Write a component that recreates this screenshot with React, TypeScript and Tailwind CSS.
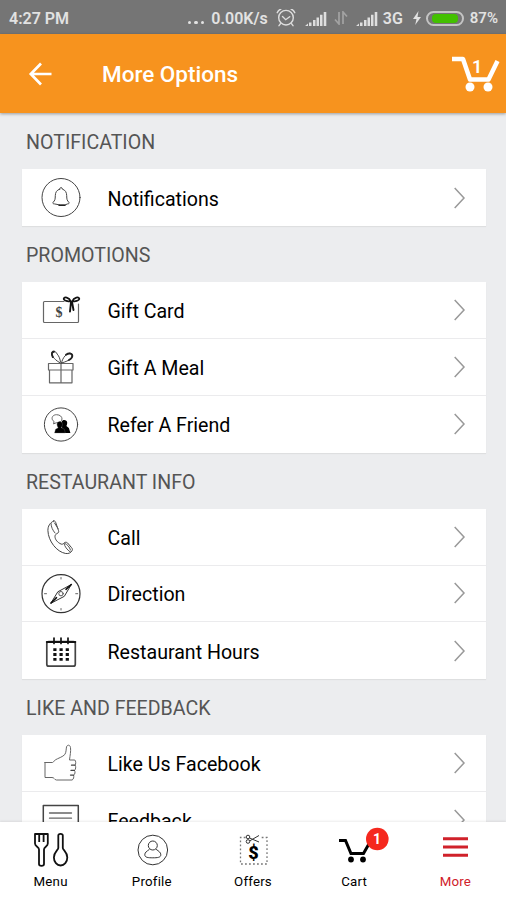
import type { ReactNode } from 'react';

interface Option {
  label: string;
  icon: ReactNode;
}

interface Section {
  title: string;
  options: Option[];
}

function RowIcon({ children }: { children: ReactNode }) {
  return (
    <svg viewBox="0 0 44 44" className="w-11 h-11 shrink-0" fill="none" stroke="#444" strokeWidth="1"
      strokeLinecap="round" strokeLinejoin="round">
      {children}
    </svg>
  );
}

const sections: Section[] = [
  {
    title: 'NOTIFICATION',
    options: [
      {
        label: 'Notifications',
        icon: (
          <RowIcon>
            <circle cx="22" cy="21.5" r="19" />
            <path d="M20.7 13.1c0-2.2 2.6-2.2 2.6 0 3.2 1 4.3 3.4 4.4 6.5.1 4 .3 4.8 2.2 6.7.7 1-.1 1.6-1.3 1.600l-3 1.200h-4l-6.200-1.200c-1.200 0-2-.6-1.300-1.600 1.900-1.900 2.100-2.700 2.200-6.700.1-3.100 1.200-5.500 4.400-6.500z" />
            <path d="M20 29.300h6" stroke="#222" strokeWidth="1.400" />
          </RowIcon>
        ),
      },
    ],
  },
  {
    title: 'PROMOTIONS',
    options: [
      {
        label: 'Gift Card',
        icon: (
          <RowIcon>
            <path d="M25 13.500H5.500a1 1 0 0 0-1 1v19a1 1 0 0 0 1 1h33a1 1 0 0 0 1-1V16" stroke="#666" strokeWidth="1.200" />
            <text x="20" y="29" textAnchor="middle" fontSize="14" fontWeight="700" fill="#444" stroke="none"
              fontFamily="Liberation Serif, serif">$</text>
            <path d="M32 13.500c-2-4.500-7-5-7.300-2.800-.2 2 4.500 2.800 7.300 2.800zM33 13.500c2-4.500 7-5 7.300-2.800.2 2-4.500 2.800-7.300 2.800z" stroke="#111" strokeWidth="1.700" />
            <path d="M32 14l-1 9.500M33 14l1.500 8" stroke="#111" strokeWidth="1.900" />
          </RowIcon>
        ),
      },
      {
        label: 'Gift A Meal',
        icon: (
          <RowIcon>
            <path d="M9.500 18.500h24.500V25H9.500zM10.500 25h22.500v12.800H10.500zM22 18.500v19.300" stroke="#666" strokeWidth="1.200" />
            <path d="M21.500 18c-4.500-2-9.500-7-8.800-10.700.8-2 4-1.500 5.500 1.800 1.800 2 3 5 3.300 8M22.500 18c1-5.500 5.500-10.500 9.500-9.800 3.500 1.500 1.500 7-9.500 9.800z" />
            <path d="M13.800 12c-1.800-3-.8-5.300 1.200-5.300M27 9.800c3-2 6.200-1.500 6.300 1.200-.1 1.800-1.500 3-3.300 4" stroke="#222" strokeWidth="1.900" />
          </RowIcon>
        ),
      },
      {
        label: 'Refer A Friend',
        icon: (
          <RowIcon>
            <circle cx="22" cy="22.500" r="16.600" />
            <path d="M13.500 18c-1.500-2.500.5-5.300 4-5.300s5.500 2 5.500 4.200-2.200 4-5.500 3.800l-3 1.200.5-2z" stroke="#666" />
            <path d="M22.700 19.500c.8-2.500 5.500-2 5.500 1 0 1.500-.3 2.500-.8 3.500l2.500 2 1.500 5h-8z" fill="#000" stroke="none" />
            <path d="M18 22c0-3.500 5.500-3.500 5.500 0 0 1.700-.5 2.700-1.200 3.700l3 1.500 1 3.800H15.500l1-3.800 2.700-1.500c-.8-1-1.200-2-1.200-3.700z" fill="#000" stroke="#777" strokeWidth=".3" />
          </RowIcon>
        ),
      },
    ],
  },
  {
    title: 'RESTAURANT INFO',
    options: [
      {
        label: 'Call',
        icon: (
          <RowIcon>
            <path d="M14.500 6c-3.700 2-5.600 5-5.600 9.500.3 10.500 8.800 21.500 17.800 23 3 .3 5-.5 6.500-3.100.5-1.200 0-2-.7-2.800l-4-4.700c-1.300-1-2.500-.8-3.500.2-.8 1-1.700 1.300-2.800 1-3.700-1.500-6.200-4.600-6.200-7.600 0-1.500.8-2.300 2-2.900 1.500-.8 2-1.700 1.500-3.100l-2.800-8c-.5-1.500-1.300-2-2.200-1.500z" />
            <path d="M12 8.500c.2 3.500 1.500 6.500 4 9.500M15.500 8l3.500 5.500M25 28.500c.8 3.200 2.800 6 6.300 8.500M26 28.500c2.500 1 4.500 3.500 5.500 6.500" stroke="#555" />
          </RowIcon>
        ),
      },
      {
        label: 'Direction',
        icon: (
          <RowIcon>
            <circle cx="22" cy="22.700" r="19" stroke="#333" strokeWidth="1.200" />
            <path d="M12 32l6.800-11.200L32.300 13.500l-6.800 11.500z" stroke="#333" />
            <path d="M12 32l5.500-5.300M27 18.300l5.300-4.800" stroke="#111" strokeWidth="1.600" />
            <circle cx="22" cy="22.700" r="2.200" stroke="#555" />
            <path d="M22 6.500v1.500M22 37.500V39M5.500 22.700h2M36.700 22.700h2" stroke="#666" />
          </RowIcon>
        ),
      },
      {
        label: 'Restaurant Hours',
        icon: (
          <RowIcon>
            <rect x="7.800" y="12.700" width="28.500" height="24.500" rx="2" stroke="#444" strokeWidth="1.700" />
            <path d="M7.800 12.900h28.500" stroke="#111" strokeWidth="2" />
            <path d="M15 9v5.500M22 9v5.500M29 9v5.500" stroke="#111" strokeWidth="1.700" />
            <path d="M14.300 20.700h3.200M20.500 20.700h3.200M26.700 20.700h3.200M14.300 25.500h3.200M20.500 25.500h3.200M26.700 25.500h3.200M14.300 30.300h3.200M20.500 30.300h3.200M26.700 30.300h3.200" stroke="#111" strokeWidth="2.800" strokeLinecap="butt" />
          </RowIcon>
        ),
      },
    ],
  },
  {
    title: 'LIKE AND FEEDBACK',
    options: [
      {
        label: 'Like Us Facebook',
        icon: (
          <RowIcon>
            <path d="M6 21.500h7.500c1.500-.5 1.500-2 3-2.700 2-1.300 7.500-3 9.300-5.300 1.500-2.200 1.200-5 1.700-7.500.7-2.500 3.500-2.500 4 .5.500 4-.5 8-1 12.500h5.300c1.200 1 1.200 4.300.2 5.200 1.200 1 .8 4.500-.6 5.200 1 1 .8 4.200-.8 4.700.5 1.800 0 4.200-1.500 4.900H17.500c-2.500-.3-2-2.500-4.500-2.500H6V21.500z" stroke="#666" />
            <path d="M36 24.200h-3.500M35.400 29.400H32M34.600 34.100h-3.100" stroke="#444" strokeWidth="1.300" />
          </RowIcon>
        ),
      },
      {
        label: 'Feedback',
        icon: (
          <RowIcon>
            <path d="M4.300 40V7.500h35V40" stroke="#444" strokeWidth="1.500" />
            <path d="M10.500 15h22M10.500 20.200h22" stroke="#666" strokeWidth="1.300" />
          </RowIcon>
        ),
      },
    ],
  },
];

function Chevron() {
  return (
    <svg viewBox="0 0 12 24" className="w-3 h-6 shrink-0" fill="none" stroke="#999" strokeWidth="1.500">
      <path d="M.7 2L10 12 .7 22" />
    </svg>
  );
}

function SignalBars() {
  return (
    <svg viewBox="0 0 22 14" className="w-[22px] h-3.5" fill="#dedede">
      <path d="M0 14l3-2.500V14zM4 10.500h2.500V14H4zM8 8h2.500v6H8zM11.500 5.500H14V14h-2.500zM15 2.800h2.500V14H15zM18.700 0h2.600v14h-2.600z" />
    </svg>
  );
}

function StatusBar() {
  return (
    <div className="h-[34px] shrink-0 flex items-center justify-between bg-[#757575] pl-[9px] pr-[8px] pt-[3px] text-[16px] font-semibold text-[#e2e2e2]">
      <span>4:27 PM</span>
      <div className="flex items-center">
        <span className="mr-[7px] flex gap-[3px] pt-2">
          <i className="size-[3.5px] rounded-full bg-[#e2e2e2]" />
          <i className="size-[3.5px] rounded-full bg-[#e2e2e2]" />
          <i className="size-[3.5px] rounded-full bg-[#e2e2e2]" />
        </span>
        <span>0.00K/s</span>
        <svg viewBox="0 0 20 20" className="ml-2 w-5 h-5" fill="none" stroke="#dedede" strokeWidth="1.400" strokeLinecap="round">
          <circle cx="10" cy="8.700" r="7.300" />
          <path d="M1.200 3.700C2 1.700 3 .7 5 0M18.800 3.700C18 1.700 17 .7 15 0M6.500 7.500l3.200 3.200 4-3M4.500 14.700L3 16.700M15.500 14.700l1.500 2" />
        </svg>
        <span className="ml-[9px]"><SignalBars /></span>
        <svg viewBox="0 0 14 14" className="ml-[7px] mb-px w-3.5 h-3.5" fill="none" stroke="#a3a3a3" strokeWidth="1.700">
          <path d="M5 1v12L1 8.500M9 13V1l4 4.500" />
        </svg>
        <span className="ml-[8px]"><SignalBars /></span>
        <span className="ml-[5px]">3G</span>
        <svg viewBox="0 0 8 14" className="ml-[10px] mb-px w-2 h-3.5" fill="#e2e2e2">
          <path d="M5.500 0L0 8h3.500L2.200 14 8 6H4.500z" />
        </svg>
        <div className="ml-[5px] mb-px w-[38px] h-[15px] rounded-full border-2 border-[#c4c4c4] py-px px-[4px]">
          <div className="h-full rounded-sm bg-[#43c000]" />
        </div>
        <span className="ml-[6px] text-[15px]">87%</span>
      </div>
    </div>
  );
}

function Header() {
  return (
    <header className="relative z-10 h-[79px] shrink-0 flex items-center bg-[#f7931e] pl-7 pr-[6px] text-white shadow-[0_1px_3px_rgba(0,0,0,0.35)]">
      <svg viewBox="0 0 24 24" className="w-6 h-6" fill="none" stroke="#fff" strokeWidth="2.700">
        <path d="M23.500 12H2.500M13 1.500L2.800 12 13 22.500" />
      </svg>
      <h1 className="ml-[50px] flex-1 pt-[3px] text-[22.5px] font-medium">More Options</h1>
      <div className="relative">
        <svg viewBox="0 0 50 37" className="w-[50px] h-[37px]" fill="none" stroke="#fff" strokeWidth="4.500">
          <path d="M2 4h11L20 24.500h18.500L47.500 6" strokeLinejoin="round" />
          <circle cx="20" cy="32" r="4.500" fill="#fff" stroke="none" />
          <circle cx="38" cy="32" r="4.500" fill="#fff" stroke="none" />
        </svg>
        <span className="absolute left-[22px] top-0 text-[18px] leading-6 font-semibold">1</span>
      </div>
    </header>
  );
}

function NavItem({ label, active, children }: { label: string; active?: boolean; children: ReactNode }) {
  return (
    <button className={`flex-1 flex flex-col items-center pt-[7px] text-[13.3px] ${active ? 'text-[#d0212a]' : 'text-black'}`}>
      <svg viewBox="0 0 44 42" className="w-11 h-[42px] overflow-visible" fill="none" stroke="#333" strokeWidth="1">
        {children}
      </svg>
      <span className="leading-[22px] tracking-[0.2px]">{label}</span>
    </button>
  );
}

function BottomNav() {
  return (
    <nav className="relative z-10 h-[78px] shrink-0 flex bg-white shadow-[0_-1px_2px_rgba(0,0,0,0.08)]">
      <NavItem label="Menu">
        <g stroke="#111" strokeWidth="1.800" strokeLinejoin="round">
          <path d="M6 5h12.800v9.500c0 3-3.800 3.500-3.800 6V35c0 2.500-5 2.500-5 0V20.500c0-2.500-4-3-4-6z" />
          <path d="M10.200 5v8M14.600 5v8" />
          <path d="M29.300 6.500c0-2.200 4.500-2.200 4.500 0V19c0 2 4.500 4 4.500 9.500 0 4.500-3 8-6.700 8s-6.700-3.500-6.700-8c0-5.500 4.400-7.500 4.400-9.500z" />
        </g>
      </NavItem>
      <NavItem label="Profile">
        <circle cx="22.800" cy="21" r="14.800" />
        <circle cx="22.800" cy="16.500" r="4.500" />
        <path d="M19.500 20.300c-2.700 2-4.700 3-4.700 5.500 0 2.800 3.500 3 8 3s8-.2 8-3c0-2.500-2-3.500-4.700-5.500" />
      </NavItem>
      <NavItem label="Offers">
        <path d="M14.500 8.500H9.500v26.500h26.500V8.500H29" stroke="#777" strokeWidth="1.300" strokeDasharray="1.800 2.200" />
        <path d="M18.500 9l9.500 4M18.500 12L28 6.500" strokeWidth="1" />
        <circle cx="17" cy="8" r="1.800" />
        <circle cx="17" cy="12.500" r="1.800" />
        <text x="22.500" y="29.500" textAnchor="middle" fontSize="18" fontWeight="900" fill="#000" stroke="none">$</text>
      </NavItem>
      <NavItem label="Cart">
        <path d="M7 11.500h6.500L19 24.500h12.500L38 13" stroke="#000" strokeWidth="3" />
        <circle cx="19" cy="30.500" r="2.900" fill="#000" stroke="none" />
        <circle cx="31" cy="30.500" r="2.900" fill="#000" stroke="none" />
        <circle cx="45.300" cy="10" r="11.300" fill="#f5281e" stroke="none" />
        <text x="45" y="15" textAnchor="middle" fontSize="14" fontWeight="700" fill="#fff" stroke="none">1</text>
      </NavItem>
      <NavItem label="More" active>
        <path d="M10 9.700h25M10 18h25M10 26.300h25" stroke="#d0212a" strokeWidth="3" />
      </NavItem>
    </nav>
  );
}

export default function App() {
  return (
    <div className="w-[506px] h-[900px] flex flex-col overflow-hidden bg-[#ecedef] font-['Roboto',sans-serif]">
      <StatusBar />
      <Header />
      <main className="flex-1 min-h-0 overflow-hidden pl-[22px] pr-[20px]">
        {sections.map(section => (
          <section key={section.title}>
            <h2 className="h-[56.25px] flex items-center pl-1 pt-[4px] text-[19.6px] text-[#555]">{section.title}</h2>
            <div className="bg-white divide-y divide-[#ebebed] shadow-[0_1px_1px_rgba(0,0,0,0.06)]">
              {section.options.map(option => (
                <div key={option.label} className="h-[56.75px] flex items-center pl-[17px] pr-[20px]">
                  {option.icon}
                  <span className="ml-[24.5px] pt-[3.5px] flex-1 text-[19.6px] text-black">{option.label}</span>
                  <Chevron />
                </div>
              ))}
            </div>
          </section>
        ))}
      </main>
      <BottomNav />
    </div>
  );
}
